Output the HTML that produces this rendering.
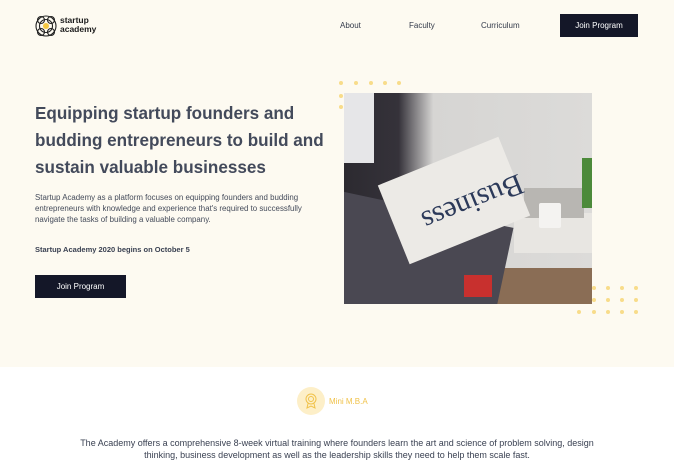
<!DOCTYPE html>
<html><head><meta charset="utf-8"><style>
*{margin:0;padding:0;box-sizing:border-box}
body{width:674px;height:462px;overflow:hidden;background:#fff;font-family:"Liberation Sans",sans-serif;position:relative}
.hero{position:absolute;left:0;top:0;width:674px;height:367px;background:#fdfaf1}
.abs{position:absolute}
.nav{font-size:8px;color:#333a4a}
.btn{background:#141728;color:#fff;font-size:8px;display:flex;align-items:center;justify-content:center}
h1{position:absolute;left:35px;top:100px;width:320px;font-size:17.1px;line-height:27px;color:#434a5b;font-weight:bold;white-space:nowrap}
.dot{position:absolute;width:4px;height:4px;border-radius:50%;background:#f8dc8a}
</style></head><body>
<div class="hero"></div>
<svg class="abs" style="left:34px;top:14px" width="24" height="24" viewBox="0 0 24 24"><g fill="none" stroke="#222" stroke-width="1.1"><circle cx="12" cy="12" r="10"/><circle cx="12" cy="12" r="6.5"/><circle cx="7" cy="6" r="3.5"/><circle cx="17" cy="6" r="3.5"/><circle cx="7" cy="18" r="3.5"/><circle cx="17" cy="18" r="3.5"/></g><circle cx="12" cy="12" r="3" fill="#f5c842"/></svg>
<div class="abs" style="left:60px;top:16px;font-size:8.5px;font-weight:bold;line-height:9px;color:#1a1a1a">startup<br>academy</div>
<div class="abs nav" style="left:340px;top:21px">About</div>
<div class="abs nav" style="left:409px;top:21px">Faculty</div>
<div class="abs nav" style="left:481px;top:21px">Curriculum</div>
<div class="abs btn" style="left:560px;top:14px;width:78px;height:23px">Join Program</div>
<h1>Equipping startup founders and<br>budding entrepreneurs to build and<br>sustain valuable businesses</h1>
<div class="abs" style="left:35px;top:192px;width:300px;font-size:7.9px;line-height:11px;color:#444b5a;white-space:nowrap">Startup Academy as a platform focuses on equipping founders and budding<br>entrepreneurs with knowledge and experience that's required to successfully<br>navigate the tasks of building a valuable company.</div>
<div class="abs" style="left:35px;top:245px;font-size:7.5px;font-weight:bold;color:#3a4152">Startup Academy 2020 begins on October 5</div>
<div class="abs btn" style="left:35px;top:275px;width:91px;height:23px">Join Program</div>
<div class="dot" style="left:339px;top:81px"></div><div class="dot" style="left:354px;top:81px"></div><div class="dot" style="left:369px;top:81px"></div><div class="dot" style="left:383px;top:81px"></div><div class="dot" style="left:397px;top:81px"></div>
<div class="dot" style="left:339px;top:94px"></div><div class="dot" style="left:339px;top:105px"></div>
<div class="abs" style="left:344px;top:93px;width:248px;height:211px;overflow:hidden;background:linear-gradient(90deg,#2c2a30 0%,#35323a 22%,#d6d5d3 36%,#dcdbd9 100%)">
<div class="abs" style="left:0;top:0;width:30px;height:70px;background:#e6e6e8"></div>
<div class="abs" style="left:170px;top:120px;width:78px;height:40px;background:#e8e6e2"></div>
<div class="abs" style="left:180px;top:95px;width:60px;height:30px;background:#b8b6b2"></div>
<div class="abs" style="left:238px;top:65px;width:10px;height:50px;background:#4c8a3a"></div>
<div class="abs" style="left:150px;top:175px;width:98px;height:36px;background:#8a6d55"></div>
<div class="abs" style="left:-20px;top:115px;width:180px;height:110px;background:#4a4852;transform:rotate(12deg)"></div>
<div class="abs" style="left:45px;top:65px;width:130px;height:85px;background:#eceae6;transform:rotate(-22deg)"></div>
<div class="abs" style="left:75px;top:92px;font-family:'Liberation Serif',serif;font-size:30px;color:#2c3a5a;transform:rotate(158deg)">Business</div>
<div class="abs" style="left:195px;top:110px;width:22px;height:25px;background:#f4f3f1;border-radius:2px"></div>
<div class="abs" style="left:120px;top:182px;width:28px;height:22px;background:#c8302e"></div>
</div>
<div class="dot" style="left:592px;top:286px"></div><div class="dot" style="left:606px;top:286px"></div><div class="dot" style="left:620px;top:286px"></div><div class="dot" style="left:634px;top:286px"></div>
<div class="dot" style="left:592px;top:298px"></div><div class="dot" style="left:606px;top:298px"></div><div class="dot" style="left:620px;top:298px"></div><div class="dot" style="left:634px;top:298px"></div>
<div class="dot" style="left:577px;top:310px"></div><div class="dot" style="left:592px;top:310px"></div><div class="dot" style="left:606px;top:310px"></div><div class="dot" style="left:620px;top:310px"></div><div class="dot" style="left:634px;top:310px"></div>
<div class="abs" style="left:297px;top:387px;width:28px;height:28px;border-radius:50%;background:#fdefc8"></div>
<svg class="abs" style="left:303px;top:393px" width="16" height="16" viewBox="0 0 16 16"><g fill="none" stroke="#f0c24a" stroke-width="1"><circle cx="8" cy="6" r="5"/><circle cx="8" cy="6" r="2.5"/><path d="M5 10.5L4 15l4-2 4 2-1-4.5"/></g></svg>
<div class="abs" style="left:329px;top:397px;font-size:8px;color:#f0c24a">Mini M.B.A</div>
<div class="abs" style="left:0;top:437px;width:674px;text-align:center;font-size:9px;line-height:12px;color:#3a4152;white-space:nowrap">The Academy offers a comprehensive 8-week virtual training where founders learn the art and science of problem solving, design<br>thinking, business development as well as the leadership skills they need to help them scale fast.</div>
</body></html>
